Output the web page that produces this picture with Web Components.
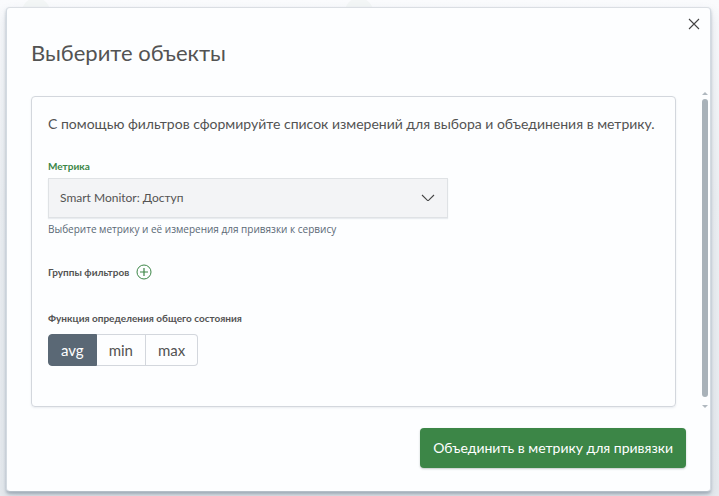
<!DOCTYPE html>
<html lang="ru">
<head>
<meta charset="utf-8">
<meta name="viewport" content="width=device-width, initial-scale=1">
<title>Выберите объекты</title>
<style>
  body {
    --text: #535353;
    --slate: #5a6875;
    --green: #3c8647;
    --line: #d3d7dd;

    margin: 0;
    min-height: 100vh;
    background: #f7f9fb;
    color: var(--text);
    font: 14px/22px Lato, "Noto Sans", sans-serif;
    overflow: hidden;
  }
</style>
</head>
<body>
<page-backdrop></page-backdrop>
<modal-dialog heading="Выберите объекты">
  <object-panel>
    <span slot="intro">С помощью фильтров сформируйте список измерений для выбора и объединения в метрику.</span>
    <metric-select label="Метрика" value="Smart Monitor: Доступ" hint="Выберите метрику и её измерения для привязки к сервису"></metric-select>
    <filter-groups>Группы фильтров</filter-groups>
    <button-group label="Функция определения общего состояния" options="avg,min,max" selected="avg"></button-group>
  </object-panel>
  <primary-button slot="footer">Объединить в метрику для привязки</primary-button>
</modal-dialog>

<script>
class BaseElement extends HTMLElement {
  connectedCallback() {
    if (this.shadowRoot) return;
    this.attachShadow({ mode: 'open' });
    this.shadowRoot.innerHTML = this.render();
    this.bind();
  }
  bind() {}
}

// dimmed page that shows round the dialog
class PageBackdrop extends BaseElement {
  render() {
    return `
      <style>
        :host {
          position: absolute;
          inset: 0;
          z-index: -1;
          overflow: hidden;
          background: linear-gradient(#fafbfd, #eef1f4 40%, #e8ecf0);
        }
        i {
          position: absolute;
          top: -2px;
          width: 28px;
          height: 28px;
          border-radius: 50%;
          background: #f3f6f6;
        }
        i:first-of-type { left: 3%; }
        i:last-of-type { left: 48%; }
      </style>
      <i></i><i></i>
    `;
  }
}

class ModalDialog extends BaseElement {
  render() {
    return `
      <style>
        :host {
          display: block;
          padding: 7px 8px 4px 6px;
        }
        section {
          position: relative;
          border: 1px solid #d3dae1;
          border-top-color: #dadee3;
          border-bottom-color: #b4bec7;
          border-radius: 4px;
          background: #fdfeff;
          box-shadow: 0 2px 3px rgba(90, 110, 130, .4), 0 6px 12px rgba(90, 110, 130, .2);
        }
        h1 {
          margin: 0;
          padding: 29px 48px 27px 24px;
          font-size: 22px;
          line-height: 32px;
          font-weight: 400;
        }
        .close {
          position: absolute;
          top: 4px;
          right: 4px;
          display: grid;
          place-items: center;
          width: 24px;
          height: 24px;
          padding: 0;
          border: 0;
          background: none;
          color: #444;
        }
        .body {
          display: flex;
          gap: 26px;
          padding: 0 2px 0 24px;
        }
        .content {
          flex: 1;
          min-width: 0;
        }
        .scroll {
          display: flex;
          flex-direction: column;
          align-items: center;
          gap: 4px;
          width: 6px;
          margin: -4px 0 -1px;
        }
        .scroll svg { fill: #b0b8bf; }
        .thumb {
          flex: 1;
          width: 6px;
          border-radius: 3px;
          background: #a9b2b9;
        }
        .scroll .down { margin-top: 4px; }
        footer {
          display: flex;
          justify-content: flex-end;
          padding: 21px 24px 23px;
        }
      </style>
      <section role="dialog" aria-labelledby="title">
        <h1 id="title">${this.getAttribute('heading')}</h1>
        <button class="close" aria-label="Закрыть">
          <svg width="12" height="12" viewBox="0 0 12 12" fill="none" stroke="currentColor" stroke-width="1.1"><path d="M1 1l10 10M11 1L1 11"/></svg>
        </button>
        <div class="body">
          <div class="content"><slot></slot></div>
          <div class="scroll" aria-hidden="true">
            <svg width="6" height="3" viewBox="0 0 6 3"><path d="M0 3L3 0l3 3z"/></svg>
            <div class="thumb"></div>
            <svg class="down" width="6" height="3" viewBox="0 0 6 3"><path d="M0 0l3 3 3-3z"/></svg>
          </div>
        </div>
        <footer><slot name="footer"></slot></footer>
      </section>
    `;
  }
}

class ObjectPanel extends BaseElement {
  render() {
    return `
      <style>
        :host {
          display: block;
          padding: 16px 16px 40px;
          border: 1px solid var(--line);
          border-radius: 4px;
          box-shadow: 0 1px 2px rgba(90, 110, 130, .12);
        }
        p { margin: 0 0 23px; }
      </style>
      <p><slot name="intro"></slot></p>
      <slot></slot>
    `;
  }
}

class MetricSelect extends BaseElement {
  render() {
    return `
      <style>
        :host {
          display: block;
          max-width: 400px;
          margin-bottom: 27px;
          font-size: 10px;
          line-height: 16px;
        }
        label {
          display: block;
          margin-bottom: 4px;
          color: var(--green);
          font-weight: 700;
        }
        .field {
          display: grid;
          align-items: center;
        }
        select, svg { grid-area: 1 / 1; }
        select {
          appearance: none;
          width: 100%;
          height: 40px;
          padding: 0 40px 0 11px;
          border: 1px solid #dfe2e5;
          border-radius: 0;
          background: #f3f4f6;
          box-shadow: 0 1px 1px rgba(90, 110, 130, .12);
          color: var(--text);
          font: inherit;
          font-size: 12px;
        }
        svg {
          justify-self: end;
          margin-right: 13px;
          pointer-events: none;
        }
        .hint {
          margin-top: 3px;
          color: var(--slate);
          font-family: "Open Sans", sans-serif;
        }
      </style>
      <label for="metric">${this.getAttribute('label')}</label>
      <div class="field">
        <select id="metric" aria-describedby="hint">
          <option>${this.getAttribute('value')}</option>
        </select>
        <svg width="14" height="8" viewBox="0 0 14 8" fill="none" stroke="#444" stroke-width="1.1"><path d="M1 1l5.2 5.2q.8.7 1.6 0L13 1"/></svg>
      </div>
      <div class="hint" id="hint">${this.getAttribute('hint')}</div>
    `;
  }
}

class FilterGroups extends BaseElement {
  render() {
    return `
      <style>
        :host {
          display: flex;
          align-items: center;
          gap: 7px;
          height: 16px;
          margin-bottom: 30px;
          font-size: 10px;
          font-weight: 700;
        }
        button {
          display: flex;
          padding: 0;
          border: 0;
          background: none;
          color: var(--green);
        }
      </style>
      <slot></slot>
      <button aria-label="Добавить группу">
        <svg width="16" height="16" viewBox="0 0 16 16" fill="none" stroke="currentColor"><circle cx="8" cy="8" r="7"/><path d="M8 4v8M4 8h8" stroke-width="1.2"/></svg>
      </button>
    `;
  }
}

class ButtonGroup extends BaseElement {
  render() {
    const selected = this.getAttribute('selected');
    return `
      <style>
        :host {
          display: block;
          font-size: 10px;
          line-height: 16px;
        }
        .label {
          margin-bottom: 8px;
          font-weight: 700;
        }
        .group { display: flex; }
        button {
          height: 32px;
          padding: 0 12px;
          border: 1px solid var(--line);
          border-left-width: 0;
          background: none;
          color: var(--text);
          font: inherit;
          font-size: 15px;
        }
        button:first-child { border-left-width: 1px; border-radius: 4px 0 0 4px; }
        button:last-child { border-radius: 0 4px 4px 0; }
        button[aria-pressed="true"] {
          border-color: var(--slate);
          background: var(--slate);
          color: #fff;
        }
      </style>
      <div class="label" id="label">${this.getAttribute('label')}</div>
      <div class="group" role="group" aria-labelledby="label">
        ${this.getAttribute('options').split(',').map((o) => `<button aria-pressed="${o === selected}">${o}</button>`).join('')}
      </div>
    `;
  }
  bind() {
    const buttons = this.shadowRoot.querySelectorAll('button');
    buttons.forEach((button) => {
      button.addEventListener('click', () => {
        buttons.forEach((b) => b.setAttribute('aria-pressed', b === button));
      });
    });
  }
}

class PrimaryButton extends BaseElement {
  render() {
    return `
      <style>
        :host { display: block; }
        button {
          height: 40px;
          padding: 0 13px;
          border: 0;
          border-radius: 4px;
          background: var(--green);
          box-shadow: 0 1px 2px rgba(60, 80, 70, .3);
          color: #fff;
          font: inherit;
        }
      </style>
      <button><slot></slot></button>
    `;
  }
}

customElements.define('page-backdrop', PageBackdrop);
customElements.define('modal-dialog', ModalDialog);
customElements.define('object-panel', ObjectPanel);
customElements.define('metric-select', MetricSelect);
customElements.define('filter-groups', FilterGroups);
customElements.define('button-group', ButtonGroup);
customElements.define('primary-button', PrimaryButton);
</script>
</body>
</html>
